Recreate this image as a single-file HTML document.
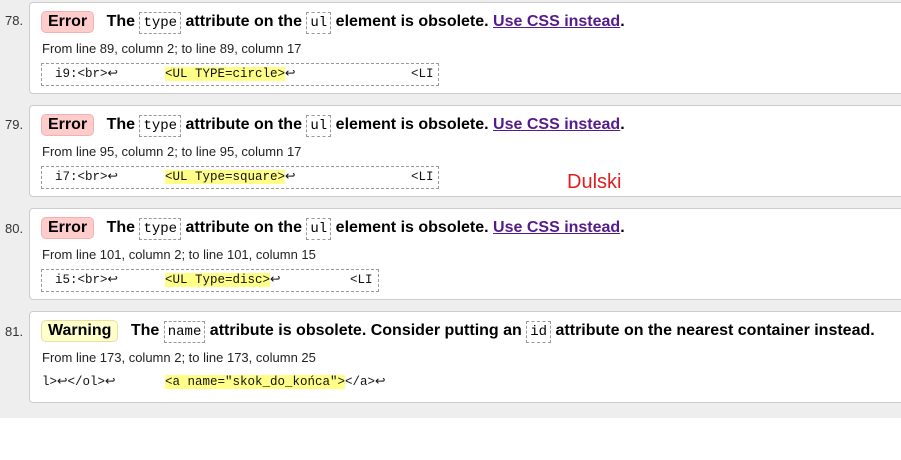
<!DOCTYPE html>
<html><head><meta charset="utf-8"><style>
body{margin:0;background:#fff;font-family:"Liberation Sans",Arial,sans-serif;width:901px;height:460px;overflow:hidden;position:relative}
.band{position:absolute;left:0;top:0;width:901px;height:418px;background:#eee}
.num{position:absolute;left:5px;font-size:13px;color:#333}
.card{position:absolute;left:29px;width:890px;height:90px;background:#fff;border:1px solid #ccc;border-radius:4px}
.h{position:absolute;left:11px;top:8px;font-size:16px;font-weight:bold;white-space:nowrap;color:#000}
.badge{display:inline-block;padding:1px 6px;border-radius:5px;margin-right:8px}
.err{background:#fcc;border:1px solid #f4b0b0}
.warn{background:#ffc;border:1px solid #e8e0a0}
.c{font-family:"Liberation Mono",monospace;font-weight:normal;font-size:14px;border:1px dashed #999;padding:2px 3px;}
a{color:#551a8b;text-decoration:underline}
.from{position:absolute;left:12px;top:38px;font-size:13px;color:#222}
.code{position:absolute;left:11px;top:60px;height:21px;border:1px dashed #999;font-family:"Liberation Mono",monospace;font-size:12.5px;line-height:21px;white-space:pre;color:#111}
.code span{position:absolute;top:0}
.hl{background:#ff8}
.dulski{position:absolute;left:567px;top:171px;color:#e02020;font-size:20px}
</style></head><body>
<div class="band"></div>
<div class="num" style="top:13px">78.</div>
<div class="card" style="top:2px">
<div class="h"><span class="badge err">Error</span> The <span class="c">type</span> attribute on the <span class="c">ul</span> element is obsolete. <a>Use CSS instead</a>.</div>
<div class="from">From line 89, column 2; to line 89, column 17</div>
<div class="code" style="width:396px"><span style="left:13px">i9:&lt;br&gt;↩</span><span style="left:123px"><b class="hl" style="font-weight:normal">&lt;UL TYPE=circle&gt;</b>↩</span><span style="left:369px">&lt;LI</span></div>
</div>
<div class="num" style="top:117px">79.</div>
<div class="card" style="top:105px">
<div class="h"><span class="badge err">Error</span> The <span class="c">type</span> attribute on the <span class="c">ul</span> element is obsolete. <a>Use CSS instead</a>.</div>
<div class="from">From line 95, column 2; to line 95, column 17</div>
<div class="code" style="width:396px"><span style="left:13px">i7:&lt;br&gt;↩</span><span style="left:123px"><b class="hl" style="font-weight:normal">&lt;UL Type=square&gt;</b>↩</span><span style="left:369px">&lt;LI</span></div>
</div>
<div class="num" style="top:221px">80.</div>
<div class="card" style="top:208px">
<div class="h"><span class="badge err">Error</span> The <span class="c">type</span> attribute on the <span class="c">ul</span> element is obsolete. <a>Use CSS instead</a>.</div>
<div class="from">From line 101, column 2; to line 101, column 15</div>
<div class="code" style="width:336px"><span style="left:13px">i5:&lt;br&gt;↩</span><span style="left:123px"><b class="hl" style="font-weight:normal">&lt;UL Type=disc&gt;</b>↩</span><span style="left:308px">&lt;LI</span></div>
</div>
<div class="num" style="top:324px">81.</div>
<div class="card" style="top:311px">
<div class="h"><span class="badge warn">Warning</span> The <span class="c">name</span> attribute is obsolete. Consider putting an <span class="c">id</span> attribute on the nearest container instead.</div>
<div class="from">From line 173, column 2; to line 173, column 25</div>
<div class="code" style="border:none;left:12px;width:400px"><span style="left:0">l&gt;↩&lt;/ol&gt;↩</span><span style="left:123px"><b class="hl" style="font-weight:normal">&lt;a name="skok_do_końca"&gt;</b>&lt;/a&gt;↩</span></div>
</div>
<div class="dulski">Dulski</div>
</body></html>
